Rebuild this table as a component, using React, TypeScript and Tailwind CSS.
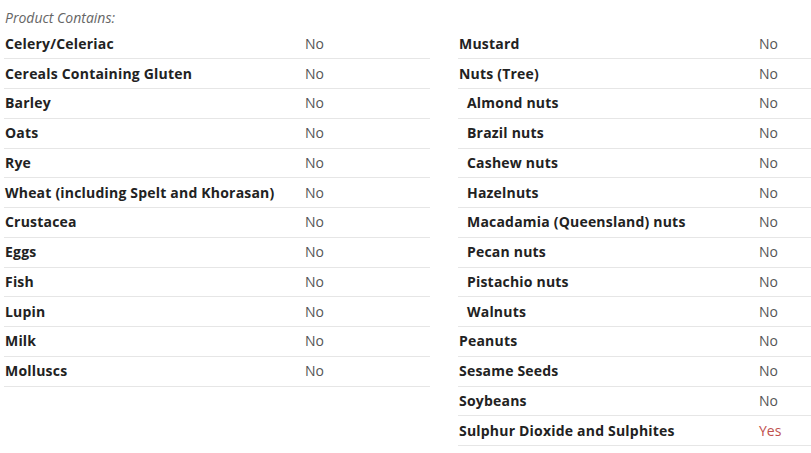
const left: [string, string, boolean?][] = [
  ["Celery/Celeriac", "No"],
  ["Cereals Containing Gluten", "No"],
  ["Barley", "No"],
  ["Oats", "No"],
  ["Rye", "No"],
  ["Wheat (including Spelt and Khorasan)", "No"],
  ["Crustacea", "No"],
  ["Eggs", "No"],
  ["Fish", "No"],
  ["Lupin", "No"],
  ["Milk", "No"],
  ["Molluscs", "No"],
];

const right: [string, string, boolean?][] = [
  ["Mustard", "No"],
  ["Nuts (Tree)", "No"],
  ["Almond nuts", "No", true],
  ["Brazil nuts", "No", true],
  ["Cashew nuts", "No", true],
  ["Hazelnuts", "No", true],
  ["Macadamia (Queensland) nuts", "No", true],
  ["Pecan nuts", "No", true],
  ["Pistachio nuts", "No", true],
  ["Walnuts", "No", true],
  ["Peanuts", "No"],
  ["Sesame Seeds", "No"],
  ["Soybeans", "No"],
  ["Sulphur Dioxide and Sulphites", "Yes"],
];

function Table({ rows }: { rows: [string, string, boolean?][] }) {
  return (
    <div className="flex flex-col">
      {rows.map(([label, value, sub]) => (
        <div key={label} className="flex items-center h-[29.75px] border-b border-[#e6e6e6]">
          <div className={sub ? "w-[301px] pl-[9px] font-bold tracking-[0.2px] text-[#222]" : "w-[301px] pl-[1px] font-bold tracking-[0.2px] text-[#222]"}>
            {label}
          </div>
          <div className={value === "Yes" ? "text-[#c0504d]" : "text-[#555]"}>{value}</div>
        </div>
      ))}
    </div>
  );
}

export default function App() {
  return (
    <div className="w-[811px] h-[453px] overflow-hidden bg-white text-[14px] leading-5 font-['Open_Sans',sans-serif]">
      <div className="pl-[5px] pt-[8px] h-[29.5px] italic text-[14px] text-[#666]">Product Contains:</div>
      <div className="flex pl-[4px] gap-[28px]">
        <div className="w-[426px] shrink-0">
          <Table rows={left} />
        </div>
        <div className="w-[360px] shrink-0">
          <Table rows={right} />
        </div>
      </div>
    </div>
  );
}
